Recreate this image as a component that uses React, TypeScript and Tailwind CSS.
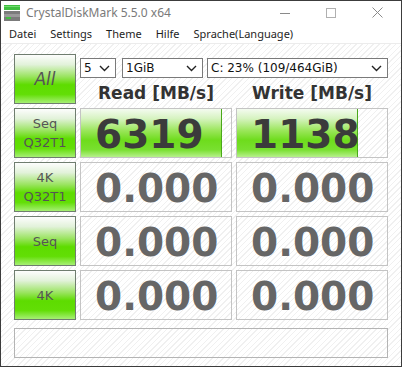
import React from "react";

const stripes =
  "bg-[image:repeating-linear-gradient(135deg,#ffffff_0px,#ffffff_3px,#f0f0f0_3px,#f0f0f0_4px)]";

function Chevron() {
  return (
    <svg width="11" height="7" viewBox="0 0 11 7" className="shrink-0">
      <polyline points="1,1 5.5,5.5 10,1" fill="none" stroke="#222" strokeWidth="1.4" />
    </svg>
  );
}

function Select({ w, text }: { w: string; text: string }) {
  return (
    <div
      className={`${w} h-[20px] border border-[#7a7a7a] bg-white flex items-center justify-between pl-[3px] pr-[5px] text-[12px] text-[#111] leading-none`}
      style={{ fontFamily: '"DejaVu Sans", Verdana, sans-serif' }}
    >
      <span>{text}</span>
      <Chevron />
    </div>
  );
}

function GreenButton({ lines, big }: { lines: string[]; big?: boolean }) {
  return (
    <div
      className="h-[50px] w-[62px] border border-[#6f7d6f] flex flex-col items-center justify-center text-[#555] bg-[linear-gradient(180deg,#fdfdfd_0%,#e2f2da_20%,#9ae460_45%,#5edc00_62%,#62de06_82%,#a6ef74_100%)]"
      style={{ fontFamily: '"DejaVu Sans", sans-serif' }}
    >
      {lines.map((l) => (
        <span
          key={l}
          className={big ? "text-[17px] leading-[20px] italic" : "text-[13px] leading-[19px]"}
        >
          {l}
        </span>
      ))}
    </div>
  );
}

function Cell({ value, bar, dark }: { value: string; bar?: number; dark?: boolean }) {
  return (
    <div className={`relative h-[50px] w-[152px] border border-[#c4c4c4] ${stripes} overflow-hidden`}>
      {bar !== undefined && (
        <div
          className="absolute left-0 top-0 bottom-0 border-r border-[#4aa81a] bg-[linear-gradient(180deg,#f4fbf0_0%,#d6f3c0_20%,#9ae65a_45%,#6edc1c_65%,#79e030_85%,#b7f08c_100%)]"
          style={{ width: bar }}
        />
      )}
      <div
        className={`relative h-full flex items-center pl-[14px] pt-[3px] font-bold text-[39px] leading-none ${
          dark ? "text-[#3b3b3b]" : "text-[#666666]"
        }`}
        style={{ fontFamily: '"DejaVu Sans", Verdana, sans-serif' }}
      >
        {value}
      </div>
    </div>
  );
}

function AppIcon() {
  return (
    <svg width="16" height="16" viewBox="0 0 16 16" className="shrink-0">
      <rect x="0" y="0" width="16" height="5" fill="#3fbf3f" />
      <rect x="0" y="1" width="16" height="1" fill="#6fdc6f" />
      <rect x="0" y="6" width="16" height="10" fill="#7b7b7b" />
      <rect x="0" y="9" width="16" height="3" fill="#9a9a9a" />
      <rect x="2" y="12" width="5" height="2" fill="#3fbf3f" />
    </svg>
  );
}

export default function App() {
  return (
    <div
      className="w-[402px] h-[367px] border border-[#3c3c3c] bg-white flex flex-col overflow-hidden"
      style={{ fontFamily: '"Noto Sans", "Open Sans", sans-serif' }}
    >
      {/* title bar */}
      <div className="h-[22px] flex items-center relative shrink-0">
        <div className="ml-[3px] mt-[2px]">
          <AppIcon />
        </div>
        <span className="ml-[6px] mt-[1px] text-[12px] text-[#7a7a7a]">CrystalDiskMark 5.5.0 x64</span>
        <div className="ml-auto flex items-center h-full">
          <div className="w-[46px] flex justify-center mt-[2px]">
            <div className="w-[10px] h-px bg-[#8a8a8a]" />
          </div>
          <div className="w-[46px] flex justify-center mt-[1px]">
            <div className="w-[10px] h-[10px] border border-[#b0b0b0]" />
          </div>
          <div className="w-[46px] flex justify-center mt-[1px] mr-[1px]">
            <svg width="11" height="11" viewBox="0 0 11 11">
              <path d="M0.5 0.5 L10.5 10.5 M10.5 0.5 L0.5 10.5" stroke="#8a8a8a" strokeWidth="1" />
            </svg>
          </div>
        </div>
      </div>
      {/* menu bar */}
      <div className="h-[20px] flex items-center pl-[1px] pt-[3px] text-[11px] text-[#1e1e1e] shrink-0">
        {["Datei", "Settings", "Theme", "Hilfe", "Sprache(Language)"].map((m) => (
          <span key={m} className="px-[7px]">
            {m}
          </span>
        ))}
      </div>
      <div className="h-px bg-[#ececec] shrink-0" />
      {/* client */}
      <div className={`flex-1 ${stripes} pl-[13px] pt-[10px] flex flex-col`}>
        <div className="grid grid-cols-[62px_152px_152px] gap-[4px]">
          <GreenButton lines={["All"]} big />
          <div className="col-span-2 h-[50px] flex flex-col">
            <div className="mt-[4px] flex items-center shrink-0">
              <Select w="w-[36px]" text="5" />
              <div className="w-[6px]" />
              <Select w="w-[81px]" text="1GiB" />
              <div className="w-[4px]" />
              <Select w="w-[181px]" text="C: 23% (109/464GiB)" />
            </div>
            <div
              className="h-[26px] grid grid-cols-[152px_152px] gap-[4px] items-center font-bold text-[17px] leading-[20px] text-[#333] pt-[3px]"
              style={{ fontFamily: '"DejaVu Sans", Verdana, sans-serif' }}
            >
              <span className="text-center">Read [MB/s]</span>
              <span className="text-center">Write [MB/s]</span>
            </div>
          </div>

          <GreenButton lines={["Seq", "Q32T1"]} />
          <Cell value="6319" bar={141} dark />
          <Cell value="1138" bar={121} dark />

          <GreenButton lines={["4K", "Q32T1"]} />
          <Cell value="0.000" />
          <Cell value="0.000" />

          <GreenButton lines={["Seq"]} />
          <Cell value="0.000" />
          <Cell value="0.000" />

          <GreenButton lines={["4K"]} />
          <Cell value="0.000" />
          <Cell value="0.000" />
        </div>
        <div className={`mt-[8px] w-[374px] h-[30px] border border-[#b4b4b4] ${stripes}`} />
      </div>
    </div>
  );
}
